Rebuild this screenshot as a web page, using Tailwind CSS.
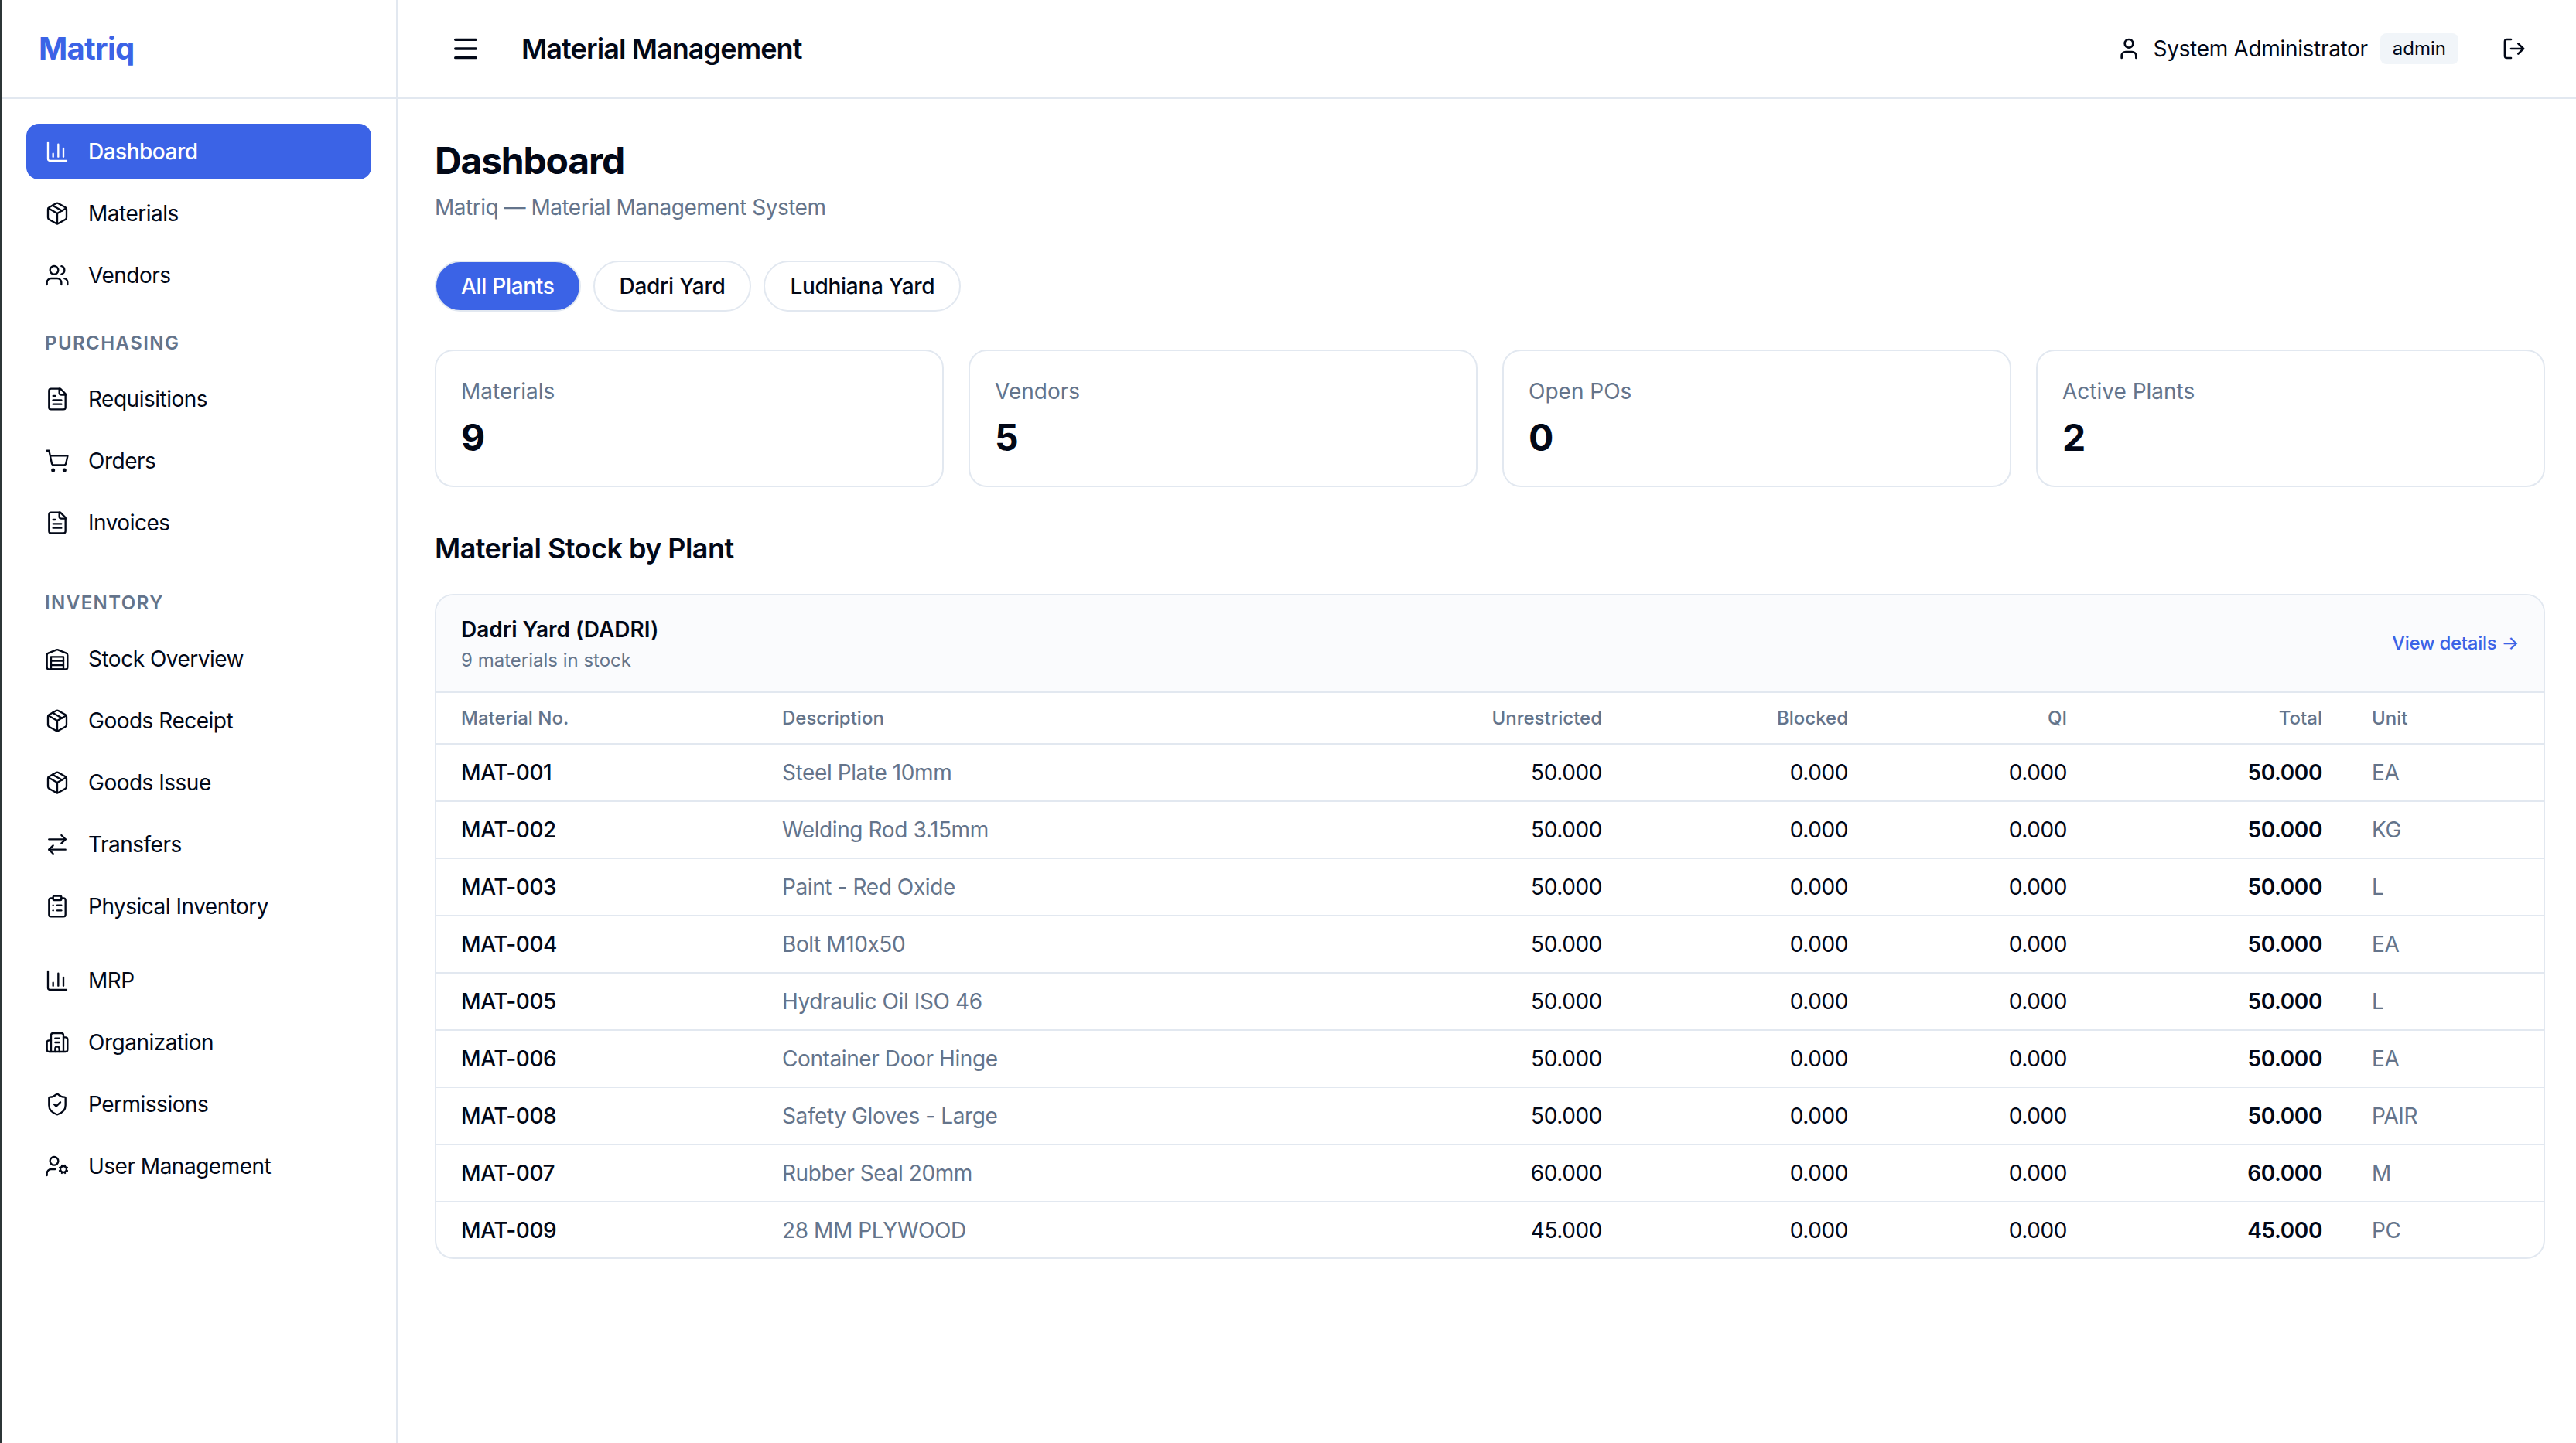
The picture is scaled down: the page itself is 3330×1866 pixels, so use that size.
<!DOCTYPE html>
<html lang="en">
<head>
  <meta charset="UTF-8">
  <title>Matriq - Material Management</title>
  <script src="https://cdn.jsdelivr.net/npm/@tailwindcss/browser@4"></script>
</head>
<body class="bg-white text-[#020817] font-['Inter',sans-serif] antialiased [font-feature-settings:'calt'_0]">
  <!-- shared lucide icons -->
  <svg class="hidden">
    <symbol id="i-chart" viewBox="0 0 24 24"><path d="M3 3v16a2 2 0 0 0 2 2h16"/><path d="M18 17V9"/><path d="M13 17V5"/><path d="M8 17v-3"/></symbol>
    <symbol id="i-package" viewBox="0 0 24 24"><path d="M11 21.73a2 2 0 0 0 2 0l7-4A2 2 0 0 0 21 16V8a2 2 0 0 0-1-1.73l-7-4a2 2 0 0 0-2 0l-7 4A2 2 0 0 0 3 8v8a2 2 0 0 0 1 1.73z"/><path d="M12 22V12"/><path d="m3.3 7 8.7 5 8.7-5"/><path d="m7.5 4.27 9 5.15"/></symbol>
    <symbol id="i-users" viewBox="0 0 24 24"><path d="M16 21v-2a4 4 0 0 0-4-4H6a4 4 0 0 0-4 4v2"/><circle cx="9" cy="7" r="4"/><path d="M22 21v-2a4 4 0 0 0-3-3.87"/><path d="M16 3.13a4 4 0 0 1 0 7.75"/></symbol>
    <symbol id="i-file" viewBox="0 0 24 24"><path d="M15 2H6a2 2 0 0 0-2 2v16a2 2 0 0 0 2 2h12a2 2 0 0 0 2-2V7Z"/><path d="M14 2v4a2 2 0 0 0 2 2h4"/><path d="M10 9H8"/><path d="M16 13H8"/><path d="M16 17H8"/></symbol>
    <symbol id="i-cart" viewBox="0 0 24 24"><circle cx="8" cy="21" r="1"/><circle cx="19" cy="21" r="1"/><path d="M2.05 2.05h2l2.66 12.42a2 2 0 0 0 2 1.58h9.78a2 2 0 0 0 1.95-1.57l1.65-7.43H5.12"/></symbol>
    <symbol id="i-warehouse" viewBox="0 0 24 24"><path d="M22 8.35V20a2 2 0 0 1-2 2H4a2 2 0 0 1-2-2V8.35A2 2 0 0 1 3.26 6.5l8-3.2a2 2 0 0 1 1.48 0l8 3.2A2 2 0 0 1 22 8.35Z"/><path d="M6 18h12"/><path d="M6 14h12"/><rect x="6" y="10" width="12" height="12"/></symbol>
    <symbol id="i-transfer" viewBox="0 0 24 24"><path d="m16 3 4 4-4 4"/><path d="M20 7H4"/><path d="m8 21-4-4 4-4"/><path d="M4 17h16"/></symbol>
    <symbol id="i-clipboard" viewBox="0 0 24 24"><rect x="8" y="2" width="8" height="4" rx="1"/><path d="M16 4h2a2 2 0 0 1 2 2v14a2 2 0 0 1-2 2H6a2 2 0 0 1-2-2V6a2 2 0 0 1 2-2h2"/><path d="M12 11h4"/><path d="M12 16h4"/><path d="M8 11h.01"/><path d="M8 16h.01"/></symbol>
    <symbol id="i-building" viewBox="0 0 24 24"><path d="M10 12h4"/><path d="M10 8h4"/><path d="M14 21v-3a2 2 0 0 0-4 0v3"/><path d="M6 10H4a2 2 0 0 0-2 2v7a2 2 0 0 0 2 2h16a2 2 0 0 0 2-2V9a2 2 0 0 0-2-2h-2"/><path d="M6 21V5a2 2 0 0 1 2-2h8a2 2 0 0 1 2 2v16"/></symbol>
    <symbol id="i-shield" viewBox="0 0 24 24"><path d="M20 13c0 5-3.5 7.5-7.66 8.95a1 1 0 0 1-.67-.01C7.5 20.5 4 18 4 13V6a1 1 0 0 1 1-1c2 0 4.5-1.2 6.24-2.72a1.17 1.17 0 0 1 1.52 0C14.51 3.81 17 5 19 5a1 1 0 0 1 1 1z"/><path d="m9 12 2 2 4-4"/></symbol>
    <symbol id="i-usercog" viewBox="0 0 24 24"><path d="M10 15H6a4 4 0 0 0-4 4v2"/><path d="m14.305 16.53.923-.382"/><path d="m15.228 13.852-.923-.383"/><path d="m16.852 12.228-.383-.923"/><path d="m16.852 17.772-.383.924"/><path d="m19.148 12.228.383-.923"/><path d="m19.53 18.696-.382-.924"/><path d="m20.772 13.852.924-.383"/><path d="m20.772 16.148.924.383"/><circle cx="18" cy="15" r="3"/><circle cx="9" cy="7" r="4"/></symbol>
    <symbol id="i-user" viewBox="0 0 24 24"><path d="M19 21v-2a4 4 0 0 0-4-4H9a4 4 0 0 0-4 4v2"/><circle cx="12" cy="7" r="4"/></symbol>
    <symbol id="i-logout" viewBox="0 0 24 24"><path d="m16 17 5-5-5-5"/><path d="M21 12H9"/><path d="M9 21H5a2 2 0 0 1-2-2V5a2 2 0 0 1 2-2h4"/></symbol>
    <symbol id="i-menu" viewBox="0 0 24 24"><path d="M4 5h16"/><path d="M4 12h16"/><path d="M4 19h16"/></symbol>
  </svg>

  <div class="flex h-[1866px] border-l-2 border-[#2c3536]">
    <!-- sidebar -->
    <aside class="w-[512px] shrink-0 border-r-2 border-[#e2e8f0]">
      <div class="h-[128px] border-b-2 border-[#e2e8f0] flex items-center pl-[48px] text-[40px] font-bold tracking-[-0.7px] text-[#3b63e6]">Matriq</div>
      <nav id="sidenav" class="px-[32px] pt-[32px] flex flex-col text-[28px] tracking-[-0.5px]">
        <a class="h-[72px] flex items-center gap-[24px] px-[24px] rounded-[16px] bg-[#3b63e6] text-white font-medium">
          <svg class="size-[32px] fill-none stroke-current stroke-[1.75] [stroke-linecap:round] [stroke-linejoin:round]"><use href="#i-chart"/></svg>Dashboard
        </a>
      </nav>
    </aside>

    <div class="flex-1 min-w-0">
      <!-- top bar -->
      <header class="h-[128px] border-b-2 border-[#e2e8f0] flex items-center pl-[48px] pr-[48px] gap-[32px]">
        <button class="p-[20px]"><svg class="size-[40px] fill-none stroke-current stroke-2 [stroke-linecap:round] [stroke-linejoin:round]"><use href="#i-menu"/></svg></button>
        <h2 class="text-[36px] font-semibold tracking-[-0.025em]">Material Management</h2>
        <div class="ml-auto flex items-center">
          <svg class="size-[32px] fill-none stroke-current stroke-2 [stroke-linecap:round] [stroke-linejoin:round]"><use href="#i-user"/></svg>
          <span class="ml-[16px] text-[28px] tracking-[-0.32px]">System Administrator</span>
          <span class="ml-[16px] h-[40px] flex items-center px-[16px] rounded-[8px] bg-[#f1f5f9] text-[24px]">admin</span>
          <button class="ml-[40px] p-[16px]"><svg class="size-[32px] fill-none stroke-current stroke-2 [stroke-linecap:round] [stroke-linejoin:round]"><use href="#i-logout"/></svg></button>
        </div>
      </header>

      <main class="pl-[48px] pr-[40px] pt-[48px]">
        <h1 class="text-[48px] leading-[64px] font-bold tracking-[-0.025em]">Dashboard</h1>
        <p class="mt-[8px] text-[28px] leading-[40px] tracking-[-0.49px] text-[#64748b]">Matriq — Material Management System</p>

        <div class="mt-[49px] flex gap-[16px] text-[28px] font-medium tracking-[-0.3px]">
          <button class="h-[66px] px-[32px] rounded-full border-2 border-[#e2e8f0] bg-[#3b63e6] text-white">All Plants</button>
          <button class="h-[66px] px-[32px] rounded-full border-2 border-[#e2e8f0]">Dadri Yard</button>
          <button class="h-[66px] px-[32px] rounded-full border-2 border-[#e2e8f0]">Ludhiana Yard</button>
        </div>

        <div class="mt-[49px] grid grid-cols-4 gap-[32px]">
          <div class="h-[178px] rounded-[24px] border-2 border-[#e2e8f0] p-[32px]">
            <p class="text-[28px] leading-[40px] text-[#64748b]">Materials</p>
            <p class="mt-[8px] text-[48px] leading-[64px] font-bold">9</p>
          </div>
          <div class="h-[178px] rounded-[24px] border-2 border-[#e2e8f0] p-[32px]">
            <p class="text-[28px] leading-[40px] text-[#64748b]">Vendors</p>
            <p class="mt-[8px] text-[48px] leading-[64px] font-bold">5</p>
          </div>
          <div class="h-[178px] rounded-[24px] border-2 border-[#e2e8f0] p-[32px]">
            <p class="text-[28px] leading-[40px] text-[#64748b]">Open POs</p>
            <p class="mt-[8px] text-[48px] leading-[64px] font-bold">0</p>
          </div>
          <div class="h-[178px] rounded-[24px] border-2 border-[#e2e8f0] p-[32px]">
            <p class="text-[28px] leading-[40px] text-[#64748b]">Active Plants</p>
            <p class="mt-[8px] text-[48px] leading-[64px] font-bold">2</p>
          </div>
        </div>

        <h3 class="mt-[51px] text-[36px] leading-[56px] font-semibold tracking-[-0.015em]">Material Stock by Plant</h3>

        <section class="mt-[31px] rounded-[24px] border-2 border-[#e2e8f0] overflow-hidden">
          <div class="h-[126px] bg-[#fafbfd] border-b-2 border-[#e2e8f0] flex items-center justify-between px-[32px]">
            <div>
              <p class="text-[28px] leading-[40px] font-semibold">Dadri Yard (DADRI)</p>
              <p class="text-[24px] leading-[32px] mt-[4px] text-[#64748b]">9 materials in stock</p>
            </div>
            <a class="text-[24px] font-medium tracking-[-0.3px] text-[#3b63e6]">View details →</a>
          </div>
          <table class="w-full table-fixed text-[28px] tracking-[-0.4px]">
            <thead class="text-[24px] tracking-normal text-[#64748b]">
              <tr class="h-[66px] border-b-2 border-[#e2e8f0]">
                <th class="w-[415px] px-[32px] text-left font-medium">Material No.</th>
                <th class="w-[700px] px-[32px] text-left font-medium">Description</th>
                <th class="w-[424px] px-[32px] text-right font-medium">Unrestricted</th>
                <th class="w-[318px] px-[32px] text-right font-medium">Blocked</th>
                <th class="w-[283px] px-[32px] text-right font-medium">QI</th>
                <th class="w-[330px] px-[32px] text-right font-medium">Total</th>
                <th class="px-[32px] text-left font-medium">Unit</th>
              </tr>
            </thead>
            <tbody id="stockRows"></tbody>
          </table>
        </section>
      </main>
    </div>
  </div>

  <script>
    const navItems = [
      ["Materials", "i-package", 8], ["Vendors", "i-users", 8],
      ["PURCHASING", null, 36],
      ["Requisitions", "i-file", 20], ["Orders", "i-cart", 8], ["Invoices", "i-file", 8],
      ["INVENTORY", null, 52],
      ["Stock Overview", "i-warehouse", 20], ["Goods Receipt", "i-package", 8], ["Goods Issue", "i-package", 8],
      ["Transfers", "i-transfer", 8], ["Physical Inventory", "i-clipboard", 8],
      ["MRP", "i-chart", 24], ["Organization", "i-building", 8], ["Permissions", "i-shield", 8], ["User Management", "i-usercog", 8]
    ];
    const nav = document.getElementById("sidenav");
    navItems.forEach(([label, icon, top]) => {
      const el = document.createElement(icon ? "a" : "p");
      el.style.marginTop = top + "px";
      if (icon) {
        el.className = "h-[72px] flex items-center gap-[24px] px-[24px] rounded-[16px]";
        el.innerHTML = `<svg class="size-[32px] fill-none stroke-current stroke-[1.75] [stroke-linecap:round] [stroke-linejoin:round]"><use href="#${icon}"/></svg>${label}`;
      } else {
        el.className = "px-[24px] text-[24px] leading-[32px] font-semibold tracking-[0.06em] text-[#64748b]";
        el.textContent = label;
      }
      nav.appendChild(el);
    });

    const rows = [
      ["MAT-001", "Steel Plate 10mm", "50.000", "EA"],
      ["MAT-002", "Welding Rod 3.15mm", "50.000", "KG"],
      ["MAT-003", "Paint - Red Oxide", "50.000", "L"],
      ["MAT-004", "Bolt M10x50", "50.000", "EA"],
      ["MAT-005", "Hydraulic Oil ISO 46", "50.000", "L"],
      ["MAT-006", "Container Door Hinge", "50.000", "EA"],
      ["MAT-008", "Safety Gloves - Large", "50.000", "PAIR"],
      ["MAT-007", "Rubber Seal 20mm", "60.000", "M"],
      ["MAT-009", "28 MM PLYWOOD", "45.000", "PC"]
    ];
    document.getElementById("stockRows").innerHTML = rows.map(([no, desc, qty, unit]) => `
      <tr class="h-[74px] border-b-2 border-[#e2e8f0] last:border-b-0 last:h-[72px]">
        <td class="px-[32px] font-medium">${no}</td>
        <td class="px-[32px] text-[#64748b]">${desc}</td>
        <td class="px-[32px] text-right">${qty}</td>
        <td class="px-[32px] text-right">0.000</td>
        <td class="px-[32px] text-right">0.000</td>
        <td class="px-[32px] text-right font-semibold">${qty}</td>
        <td class="px-[32px] text-[#64748b]">${unit}</td>
      </tr>`).join("");
  </script>
</body>
</html>
